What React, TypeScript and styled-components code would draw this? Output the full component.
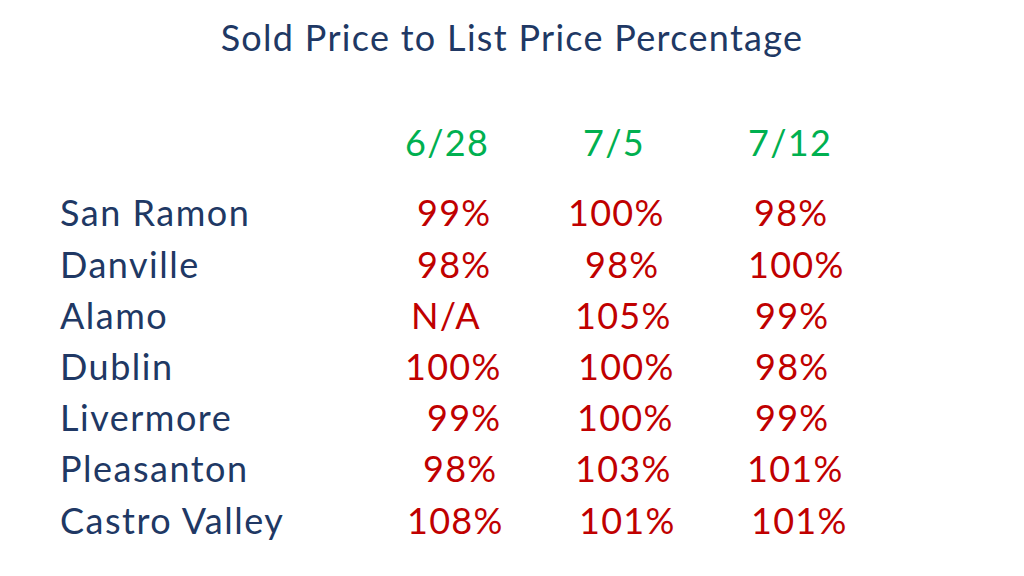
import { Fragment } from 'react';
import styled, { createGlobalStyle } from 'styled-components';

const GlobalStyle = createGlobalStyle`
  html, body {
    margin: 0;
    padding: 0;
    background: #ffffff;
  }
`;

const Slide = styled.div`
  width: 1024px;
  height: 576px;
  box-sizing: border-box;
  padding-top: 16px;
  font-family: Lato, 'Open Sans', sans-serif;
  background: #ffffff;
  overflow: hidden;
`;

const Title = styled.h1`
  margin: 0;
  font-size: 36px;
  font-weight: 400;
  line-height: 1.2;
  letter-spacing: 1.3px;
  color: #203864;
  text-align: center;
`;

const Table = styled.div`
  display: grid;
  grid-template-columns: 345px 163px 179px auto;
  grid-auto-rows: 51.2px;
  margin-left: 60px;
  font-size: 36px;
  line-height: 51.2px;
  letter-spacing: 1.3px;
  white-space: nowrap;
`;

const HeaderRow = styled(Table)`
  margin-top: 58px;
  margin-bottom: 19px;
`;

const Name = styled.div`
  color: #203864;
  letter-spacing: 1.5px;
`;

const DateCell = styled.div<{ $indent: number }>`
  color: #00b050;
  padding-left: ${p => p.$indent}px;
`;

const Value = styled.div<{ $indent: number }>`
  color: #c00000;
  padding-left: ${p => p.$indent}px;
`;

const dates = [
  { label: '6/28', indent: 0 },
  { label: '7/5', indent: 15 },
  { label: '7/12', indent: 1 },
];

// indents reproduce the space-padded alignment of the original slide
const rows: { city: string; cells: [string, number][] }[] = [
  { city: 'San Ramon', cells: [['99%', 12], ['100%', 0], ['98%', 7]] },
  { city: 'Danville', cells: [['98%', 12], ['98%', 17], ['100%', 1]] },
  { city: 'Alamo', cells: [['N/A', 6], ['105%', 7], ['99%', 8]] },
  { city: 'Dublin', cells: [['100%', 0], ['100%', 10], ['98%', 8]] },
  { city: 'Livermore', cells: [['99%', 22], ['100%', 9], ['99%', 8]] },
  { city: 'Pleasanton', cells: [['98%', 18], ['103%', 7], ['101%', 0]] },
  { city: 'Castro Valley', cells: [['108%', 2], ['101%', 11], ['101%', 4]] },
];

function App() {
  return (
    <Slide>
      <GlobalStyle />
      <Title>Sold Price to List Price Percentage</Title>
      <HeaderRow>
        <Name />
        {dates.map(d => (
          <DateCell key={d.label} $indent={d.indent}>
            {d.label}
          </DateCell>
        ))}
      </HeaderRow>
      <Table>
        {rows.map(row => (
          <Fragment key={row.city}>
            <Name>{row.city}</Name>
            {row.cells.map(([text, indent], i) => (
              <Value key={i} $indent={indent}>
                {text}
              </Value>
            ))}
          </Fragment>
        ))}
      </Table>
    </Slide>
  );
}

export default App;
